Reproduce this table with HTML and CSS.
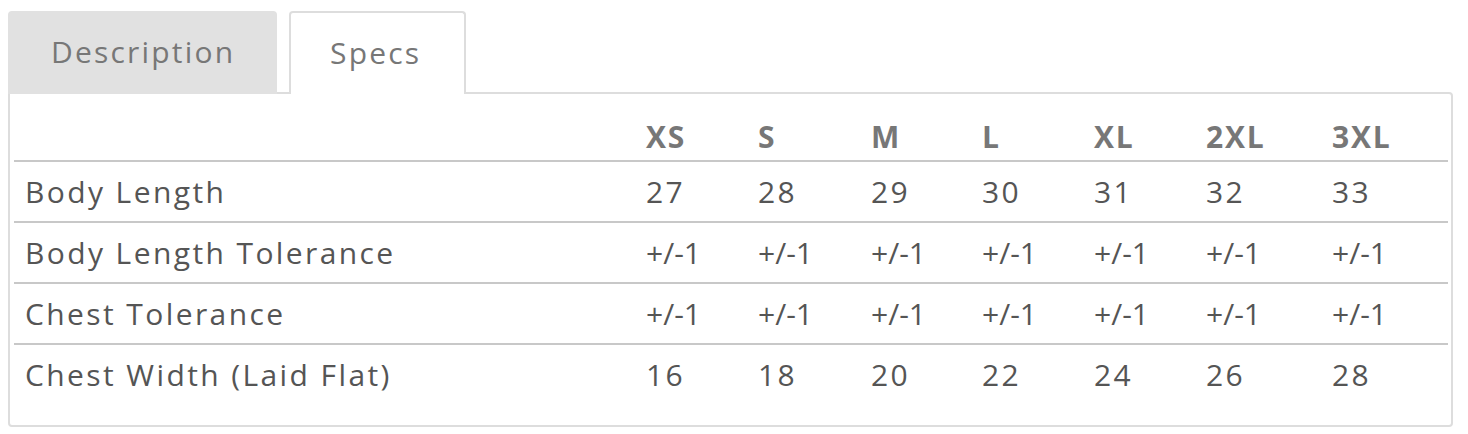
FILE: index.html
```html
<!DOCTYPE html>
<html lang="en">
<head>
<meta charset="utf-8">
<title>Specs</title>
<link rel="stylesheet" href="styles.css">
</head>
<body>
<div class="tabs">
  <div class="tab tab-inactive">Description</div>
  <div class="tab tab-active">Specs</div>
</div>
<div class="panel">
  <table class="specs">
    <colgroup>
      <col class="c-label"><col class="c-xs"><col class="c-s"><col class="c-m"><col class="c-l"><col class="c-xl"><col class="c-2xl"><col class="c-3xl">
    </colgroup>
    <thead>
      <tr><th></th><th>XS</th><th>S</th><th>M</th><th>L</th><th>XL</th><th>2XL</th><th>3XL</th></tr>
    </thead>
    <tbody>
      <tr><td>Body Length</td><td>27</td><td>28</td><td>29</td><td>30</td><td>31</td><td>32</td><td>33</td></tr>
      <tr class="tol"><td>Body Length Tolerance</td><td>+/-1</td><td>+/-1</td><td>+/-1</td><td>+/-1</td><td>+/-1</td><td>+/-1</td><td>+/-1</td></tr>
      <tr class="tol"><td>Chest Tolerance</td><td>+/-1</td><td>+/-1</td><td>+/-1</td><td>+/-1</td><td>+/-1</td><td>+/-1</td><td>+/-1</td></tr>
      <tr class="last"><td>Chest Width (Laid Flat)</td><td>16</td><td>18</td><td>20</td><td>22</td><td>24</td><td>26</td><td>28</td></tr>
    </tbody>
  </table>
</div>
</body>
</html>
```

FILE: styles.css
```css
html, body {
  margin: 0;
  padding: 0;
  background: #fff;
}
body {
  padding: 11px 15px 0 8px;
  font-family: "Open Sans", "DejaVu Sans", sans-serif;
  font-size: 30px;
  color: #555;
}
.tabs {
  display: flex;
  gap: 12px;
  margin-bottom: -2px;
  position: relative;
  z-index: 1;
}
.tab {
  height: 83px;
  box-sizing: border-box;
  display: flex;
  align-items: center;
  padding-bottom: 2px;
  border-radius: 4px 4px 0 0;
  color: #777;
  font-size: 30px;
  letter-spacing: 2.2px;
}
.tab-inactive {
  width: 269px;
  background: #e1e1e1;
  padding-left: 43px;
}
.tab-active {
  width: 177px;
  background: #fff;
  border: 2px solid #ddd;
  border-bottom: none;
  padding-left: 39px;
}
.panel {
  width: 1445px;
  height: 335px;
  box-sizing: border-box;
  border: 2px solid #ddd;
  border-radius: 0 4px 4px 4px;
  padding: 0 3px 0 4px;
}
.specs {
  width: 1434px;
  table-layout: fixed;
  border-collapse: collapse;
}
.c-label { width: 621px; }
.c-xs { width: 112px; }
.c-s { width: 113px; }
.c-m { width: 111px; }
.c-l { width: 112px; }
.c-xl { width: 112px; }
.c-2xl { width: 126px; }
.c-3xl { width: 127px; }
.specs th,
.specs td {
  padding: 0 0 0 11px;
  text-align: left;
  white-space: nowrap;
  letter-spacing: 2.4px;
}
.specs th {
  height: 63px;
  vertical-align: bottom;
  padding-bottom: 3px;
  line-height: 40px;
  font-weight: 700;
  color: #777;
  letter-spacing: 1.8px;
  border-bottom: 2px solid #c8c8c8;
}
.specs td {
  height: 57px;
  vertical-align: middle;
  padding-top: 1px;
  padding-bottom: 1px;
  line-height: 40px;
  color: #555;
  border-bottom: 2px solid #c8c8c8;
}
.specs tr.tol td + td {
  letter-spacing: 0;
}
.specs tr.last td {
  border-bottom: none;
}
```
